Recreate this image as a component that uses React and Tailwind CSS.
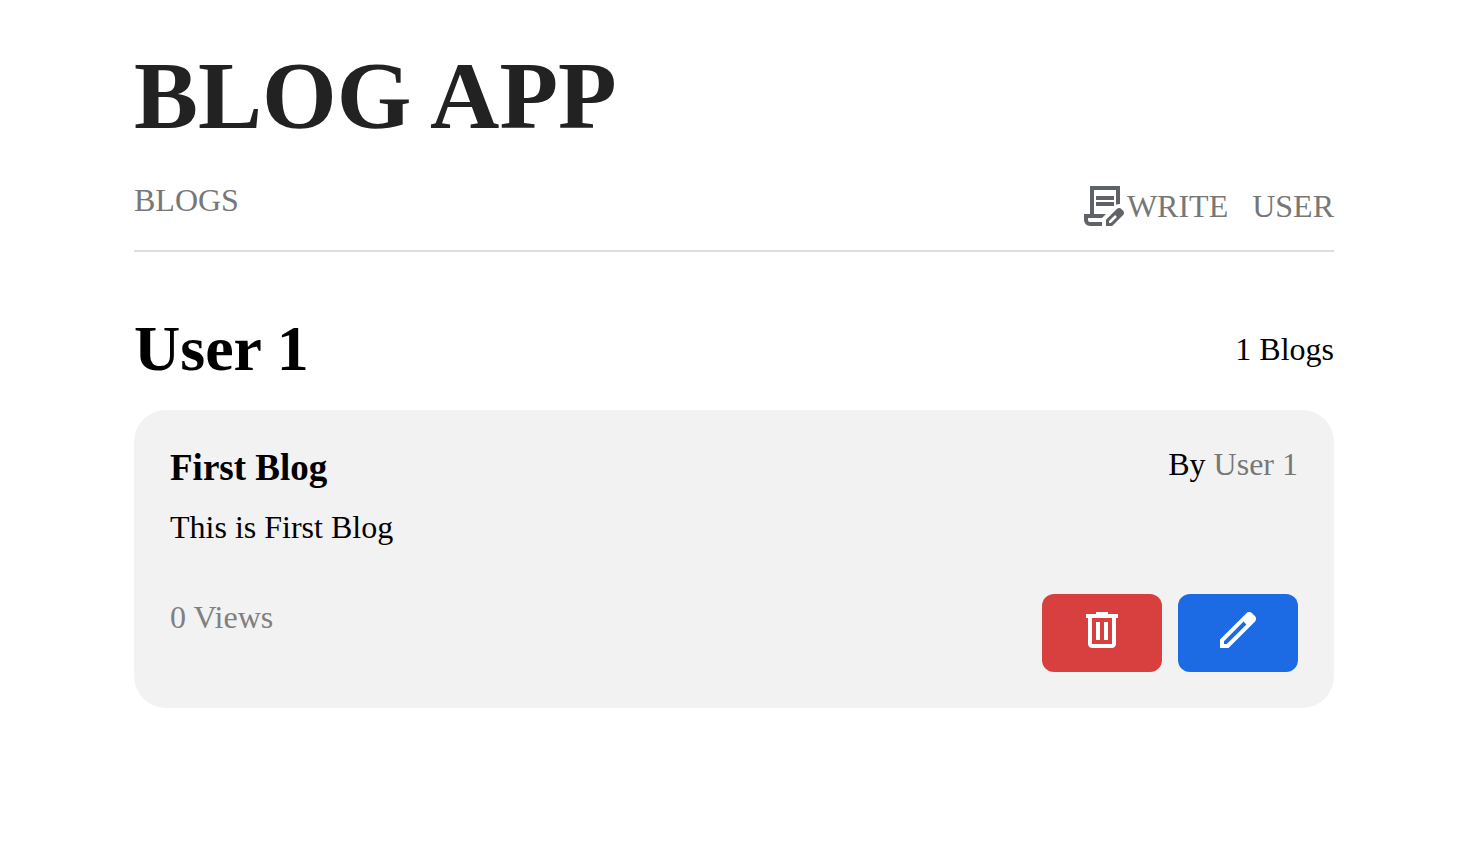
const icon = "block size-12 shrink-0";

function ContractEditIcon() {
  return (
    <svg className={icon} viewBox="0 -960 960 960" fill="#5f6368" aria-hidden="true">
      <path d="M360-600v-80h360v80H360Zm0 120v-80h360v80H360ZM240-80q-50 0-85-35t-35-85v-120h120v-560h600v361q-20-2-40.5 1.5T760-505v-295H320v480h240l-80 80H200v40q0 17 11.5 28.5T240-160h240v80H240Zm320 0v-123l221-220q9-9 20-13t22-4q12 0 23 4.500t20 13.500l37 37q8 9 12.500 20t4.500 22q0 11-4 22.500T903-300L683-80H560Zm60-60h38l121-122-18-19-19-18-122 121v38Z" />
    </svg>
  );
}

function DeleteIcon() {
  return (
    <svg className={icon} viewBox="0 -960 960 960" fill="#fff" aria-hidden="true">
      <path d="M280-120q-33 0-56.500-23.500T200-200v-520h-40v-80h200v-40h240v40h200v80h-40v520q0 33-23.500 56.500T680-120H280Zm400-600H280v520h400v-520ZM360-280h80v-360h-80v360Zm160 0h80v-360h-80v360Z" />
    </svg>
  );
}

function EditIcon() {
  return (
    <svg className={icon} viewBox="0 -960 960 960" fill="#fff" aria-hidden="true">
      <path d="M200-200h57l391-391-57-57-391 391v57Zm-80 80v-170l528-527q12-11 26.500-17t30.500-6q16 0 31 6t26 18l55 56q12 11 17.500 26t5.500 30q0 16-5.500 30.500T817-647L290-120H120Z" />
    </svg>
  );
}

export default function App() {
  return (
    <div className="mx-auto max-w-[1232px] px-4 pt-10 pb-16 font-['Liberation_Serif',serif] text-[32px] leading-9 text-black">
      <header>
        <h1 className="text-8xl leading-[112px] font-bold text-[#222]">BLOG APP</h1>
        <nav className="flex items-start justify-between border-b-2 border-[#ddd] pt-[30px] pb-5 text-[#777]">
          <a href="#blogs">BLOGS</a>
          <div className="flex items-center gap-6">
            <a href="#write" className="flex items-center gap-px">
              <ContractEditIcon />
              WRITE
            </a>
            <a href="#user">USER</a>
          </div>
        </nav>
      </header>
      <main className="pt-[61px]">
        <div className="flex items-center justify-between">
          <h2 className="text-[64px] leading-[72px] font-bold">User 1</h2>
          <p>1 Blogs</p>
        </div>
        <article className="mt-[25px] rounded-[32px] bg-[#f2f2f2] p-9">
          <div className="flex items-start justify-between">
            <h3 className="text-[37px] leading-[44px] font-bold">First Blog</h3>
            <p>
              By <a href="#user-1" className="text-[#777]">User 1</a>
            </p>
          </div>
          <p className="mt-[19px]">This is First Blog</p>
          <div className="mt-[49px] flex items-start justify-between">
            <p className="mt-[5px] text-[#808080]">0 Views</p>
            <div className="flex gap-4">
              <button type="button" aria-label="Delete" className="flex h-[78px] w-30 justify-center rounded-xl bg-[#d84040] pt-3">
                <DeleteIcon />
              </button>
              <button type="button" aria-label="Edit" className="flex h-[78px] w-30 justify-center rounded-xl bg-[#1d6ae5] pt-3">
                <EditIcon />
              </button>
            </div>
          </div>
        </article>
      </main>
    </div>
  );
}
